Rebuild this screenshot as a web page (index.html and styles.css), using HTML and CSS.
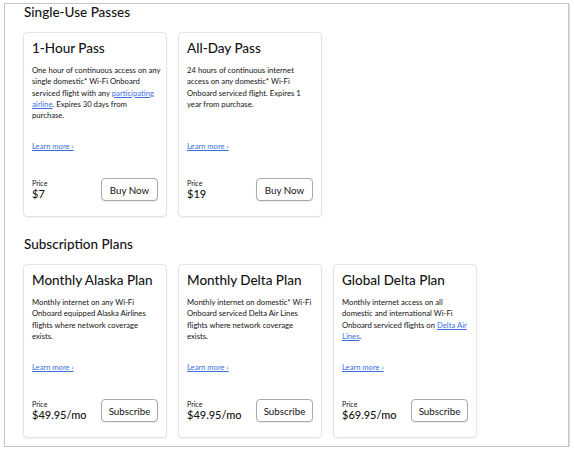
FILE: index.html
```html
<!DOCTYPE html>
<html>
<head>
<meta charset="utf-8">
<link rel="stylesheet" href="styles.css">
</head>
<body>
<div class="frame">
  <section class="section">
    <h2 class="section-title">Single-Use Passes</h2>
    <div class="cards">
      <div class="card">
        <h3 class="card-title">1-Hour Pass</h3>
        <p class="card-desc">One hour of continuous access on any<br>single domestic* Wi-Fi Onboard<br>serviced flight with any <a href="#">participating<br>airline</a>. Expires 30 days from<br>purchase.</p>
        <a class="learn" href="#">Learn more ›</a>
        <div class="card-foot">
          <div class="price"><span class="price-label">Price</span><span class="price-value">$7</span></div>
          <button class="btn">Buy Now</button>
        </div>
      </div>
      <div class="card">
        <h3 class="card-title">All-Day Pass</h3>
        <p class="card-desc">24 hours of continuous internet<br>access on any domestic* Wi-Fi<br>Onboard serviced flight. Expires 1<br>year from purchase.</p>
        <a class="learn" href="#">Learn more ›</a>
        <div class="card-foot">
          <div class="price"><span class="price-label">Price</span><span class="price-value">$19</span></div>
          <button class="btn">Buy Now</button>
        </div>
      </div>
    </div>
  </section>
  <section class="section second">
    <h2 class="section-title">Subscription Plans</h2>
    <div class="cards">
      <div class="card">
        <h3 class="card-title">Monthly Alaska Plan</h3>
        <p class="card-desc">Monthly internet on any Wi-Fi<br>Onboard equipped Alaska Airlines<br>flights where network coverage<br>exists.</p>
        <a class="learn" href="#">Learn more ›</a>
        <div class="card-foot">
          <div class="price"><span class="price-label">Price</span><span class="price-value">$49.95/mo</span></div>
          <button class="btn">Subscribe</button>
        </div>
      </div>
      <div class="card">
        <h3 class="card-title">Monthly Delta Plan</h3>
        <p class="card-desc">Monthly internet on domestic* Wi-Fi<br>Onboard serviced Delta Air Lines<br>flights where network coverage<br>exists.</p>
        <a class="learn" href="#">Learn more ›</a>
        <div class="card-foot">
          <div class="price"><span class="price-label">Price</span><span class="price-value">$49.95/mo</span></div>
          <button class="btn">Subscribe</button>
        </div>
      </div>
      <div class="card">
        <h3 class="card-title">Global Delta Plan</h3>
        <p class="card-desc">Monthly internet access on all<br>domestic and international Wi-Fi<br>Onboard serviced flights on <a href="#">Delta Air<br>Lines</a>.</p>
        <a class="learn" href="#">Learn more ›</a>
        <div class="card-foot">
          <div class="price"><span class="price-label">Price</span><span class="price-value">$69.95/mo</span></div>
          <button class="btn">Subscribe</button>
        </div>
      </div>
    </div>
  </section>
</div>
</body>
</html>
```

FILE: styles.css
```css
html, body {
  margin: 0;
  padding: 0;
  background: #ffffff;
}
body {
  font-family: Lato, "Open Sans", "Liberation Sans", sans-serif;
  color: #141414;
}
.frame {
  margin: 3px 5px 0 4px;
  height: 444px;
  box-sizing: border-box;
  border: 1px solid #c4c4c4;
  box-shadow: 1px 1px 1px rgba(0,0,0,0.12);
  padding: 0 0 0 18px;
}
.section-title {
  margin: 0;
  font-size: 13.5px;
  line-height: 16px;
  font-weight: 500;
  padding-left: 1px;
}
.second {
  margin-top: 19px;
}
.cards {
  display: flex;
  gap: 11px;
  margin-top: 12px;
  align-items: stretch;
}
.card {
  width: 144px;
  box-sizing: border-box;
  border: 1px solid #e4e4e4;
  border-radius: 4px;
  box-shadow: 0 1px 2px rgba(0,0,0,0.06);
  padding: 7px 4px 14.5px 8px;
  display: flex;
  flex-direction: column;
}
.card-title {
  margin: 0;
  font-size: 13.5px;
  line-height: 16px;
  font-weight: 500;
  white-space: nowrap;
}
.card-desc {
  margin: 9px 0 0 0;
  font-size: 7.7px;
  line-height: 11.3px;
  white-space: nowrap;
  flex: 1;
}
.card-desc a, .learn {
  color: #3a6fe0;
  text-decoration: underline;
}
.learn {
  margin-top: 20px;
  font-size: 7.6px;
  line-height: 11px;
  align-self: flex-start;
}
.card-foot {
  margin-top: 26px;
  margin-right: 4px;
  display: flex;
  justify-content: space-between;
  align-items: center;
}
.price {
  display: flex;
  flex-direction: column;
  padding-top: 1px;
}
.price-label {
  font-size: 7px;
  line-height: 8px;
}
.price-value {
  font-size: 11px;
  line-height: 14px;
  font-weight: 500;
}
.btn {
  width: 57px;
  height: 23px;
  box-sizing: border-box;
  border: 1px solid #a9a9a9;
  border-radius: 4px;
  background: #ffffff;
  box-shadow: 0 1px 1px rgba(0,0,0,0.08);
  font-family: inherit;
  font-size: 9.8px;
  color: #141414;
  padding: 0;
}
```
